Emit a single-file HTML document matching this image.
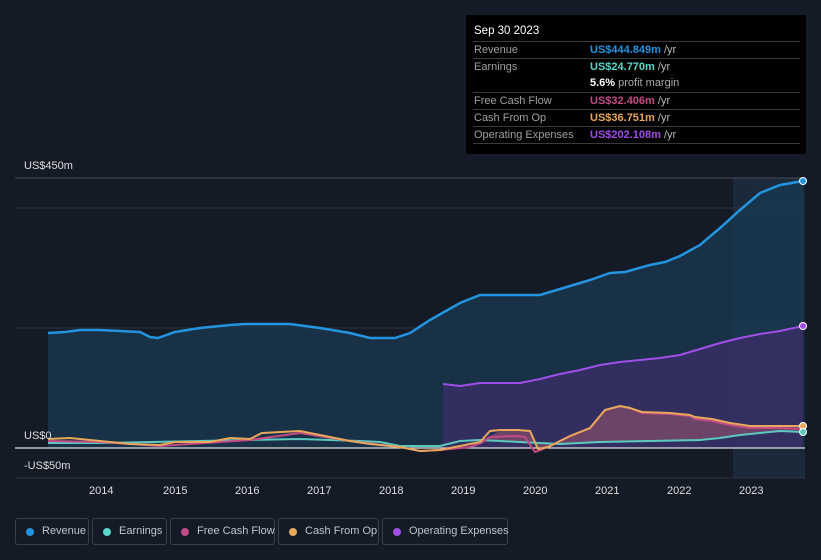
<!DOCTYPE html>
<html><head><meta charset="utf-8"><style>
html,body{margin:0;height:560px}
body{background:#151b26;width:821px;overflow:hidden;font-family:"Liberation Sans",sans-serif;position:relative}
.tt{position:absolute;left:466px;top:15px;width:340px;height:139px;background:#000;color:#ccc;font-size:11px}
.tt .d{position:absolute;left:8px;top:10px;color:#fff;font-size:11.5px}
.row{position:absolute;left:7px;width:327px;border-top:1px solid #3a3a3a;height:17px}
.row span{position:absolute;top:2px;white-space:nowrap}
.row .l{left:1px;color:#a0a0a0}
.row .v{left:117px;font-weight:bold}
.row .v i{font-style:normal;font-weight:normal;color:#bbb}
.lg{position:absolute;top:518px;height:27px;border:1px solid #3a3f4a;border-radius:3px;color:#bfc3cc;font-size:11px;line-height:27px;box-sizing:border-box;white-space:nowrap}
.lg b{position:absolute;left:10px;top:9px;width:8px;height:8px;border-radius:50%}
.lg span{position:absolute;left:26px;top:-1px;white-space:nowrap}
.ax{position:absolute;color:#ddd;font-size:11px;white-space:nowrap}
</style></head><body>
<svg width="821" height="560" style="position:absolute;left:0;top:0">
<rect x="733" y="178" width="72" height="300" fill="#1b2a3a"/>
<line x1="15" y1="178" x2="805" y2="178" stroke="#444a55" stroke-width="1"/>
<line x1="15" y1="208" x2="805" y2="208" stroke="#2c323d"/>
<line x1="15" y1="328" x2="805" y2="328" stroke="#2c323d"/>
<line x1="15" y1="478" x2="805" y2="478" stroke="#2c323d"/>
<path d="M48,333 L65,332 80,330 100,330 120,331 140,332 150,337 158,338 175,332 200,328 230,325 245,324 290,324 320,328 350,333 370,338 395,338 410,333 430,320 460,303 480,295 500,295 540,295 560,289 590,280 610,273 625,272 650,265 665,262 680,256 700,245 720,228 740,210 760,193 780,185 803,181 L803,448 L48,448Z" fill="#1a3a52" opacity="0.75"/>
<path d="M443,384 L460,386 480,383 520,383 540,379 560,374 580,370 600,365 620,362 660,358 680,355 700,349 720,343 740,338 760,334 780,331 803,326 L803,448 L443,448Z" fill="#3a2f66" opacity="0.8"/>
<path d="M480,442 L500,431 520,430 530,431 538,449 548,447 570,436 590,428 605,410 620,406 630,408 642,412 670,413 690,415 695,417 712,419 730,423 750,426 780,426 803,426 L803,432 780,431 760,433 740,435 720,438 700,440 650,441 600,442 560,444 520,442 500,441Z" fill="#7a4a6a" opacity="0.8"/>
<line x1="15" y1="448" x2="805" y2="448" stroke="#e0e0e0" stroke-width="1.2"/>
<path d="M48,333 L65,332 80,330 100,330 120,331 140,332 150,337 158,338 175,332 200,328 230,325 245,324 290,324 320,328 350,333 370,338 395,338 410,333 430,320 460,303 480,295 500,295 540,295 560,289 590,280 610,273 625,272 650,265 665,262 680,256 700,245 720,228 740,210 760,193 780,185 803,181" fill="none" stroke="#2394df" stroke-width="2.5"/>
<path d="M443,384 L460,386 480,383 520,383 540,379 560,374 580,370 600,365 620,362 660,358 680,355 700,349 720,343 740,338 760,334 780,331 803,326" fill="none" stroke="#a04ee8" stroke-width="2"/>
<path d="M48,443 L100,443 200,441 300,439 360,441 380,442 400,446 440,446 460,441 480,440 500,441 520,442 560,444 600,442 650,441 700,440 720,438 740,435 760,433 780,431 803,432" fill="none" stroke="#5cc9c0" stroke-width="2"/>
<path d="M48,441 L100,442 160,446 250,440 300,433 350,441 400,447 420,451 440,450 470,447 481,443 490,437 515,436 525,437 535,452 548,447 570,436 590,428 605,410 620,406 630,408 642,413 670,414 690,416 695,419 712,421 730,425 750,428 780,428 803,429" fill="none" stroke="#c24a86" stroke-width="2"/>
<path d="M48,439 L70,438 100,441 130,444 160,445 175,442 210,442 230,438 250,439 262,433 300,431 320,435 350,441 370,444 400,447 420,451 440,450 460,446 480,442 490,431 500,430 518,430 530,431 538,449 548,447 570,436 590,428 605,410 620,406 630,408 642,412 670,413 690,415 695,417 712,419 730,423 750,426 780,426 803,426" fill="none" stroke="#e8a85a" stroke-width="2"/>
<circle cx="803" cy="181" r="3.5" fill="#2394df" stroke="#fff" stroke-width="1"/>
<circle cx="803" cy="326" r="3.5" fill="#a04ee8" stroke="#fff" stroke-width="1"/>
<circle cx="803" cy="426" r="3.5" fill="#e8a85a" stroke="#fff" stroke-width="1"/>
<circle cx="803" cy="432" r="3.5" fill="#5cc9c0" stroke="#fff" stroke-width="1"/>
</svg>
<div class="ax" style="left:24px;top:160px">US$450m</div>
<div class="ax" style="left:24px;top:430px">US$0</div>
<div class="ax" style="left:24px;top:460px">-US$50m</div>
<div class="ax" style="left:89px;top:485px">2014</div>
<div class="ax" style="left:163px;top:485px">2015</div>
<div class="ax" style="left:235px;top:485px">2016</div>
<div class="ax" style="left:307px;top:485px">2017</div>
<div class="ax" style="left:379px;top:485px">2018</div>
<div class="ax" style="left:451px;top:485px">2019</div>
<div class="ax" style="left:523px;top:485px">2020</div>
<div class="ax" style="left:595px;top:485px">2021</div>
<div class="ax" style="left:667px;top:485px">2022</div>
<div class="ax" style="left:739px;top:485px">2023</div>
<div class="tt">
<div class="d">Sep 30 2023</div>
<div class="row" style="top:26px"><span class="l">Revenue</span><span class="v" style="color:#2394df">US$444.849m <i>/yr</i></span></div>
<div class="row" style="top:43px"><span class="l">Earnings</span><span class="v" style="color:#5cd6c8">US$24.770m <i>/yr</i></span></div>
<div style="position:absolute;left:124px;top:62px;color:#fff;font-weight:bold;white-space:nowrap">5.6% <span style="color:#aaa;font-weight:normal">profit margin</span></div>
<div class="row" style="top:77px"><span class="l">Free Cash Flow</span><span class="v" style="color:#c24a86">US$32.406m <i>/yr</i></span></div>
<div class="row" style="top:94px"><span class="l">Cash From Op</span><span class="v" style="color:#e8a85a">US$36.751m <i>/yr</i></span></div>
<div class="row" style="top:111px"><span class="l">Operating Expenses</span><span class="v" style="color:#a04ee8">US$202.108m <i>/yr</i></span></div>
<div class="row" style="top:128px;height:0"></div>
</div>
<div class="lg" style="left:15px;width:74px"><b style="background:#2394df"></b><span>Revenue</span></div>
<div class="lg" style="left:92px;width:75px"><b style="background:#5cd6c8"></b><span>Earnings</span></div>
<div class="lg" style="left:170px;width:105px"><b style="background:#c24a86"></b><span>Free Cash Flow</span></div>
<div class="lg" style="left:278px;width:101px"><b style="background:#e8a85a"></b><span>Cash From Op</span></div>
<div class="lg" style="left:382px;width:126px"><b style="background:#a04ee8"></b><span>Operating Expenses</span></div>
</body></html>
